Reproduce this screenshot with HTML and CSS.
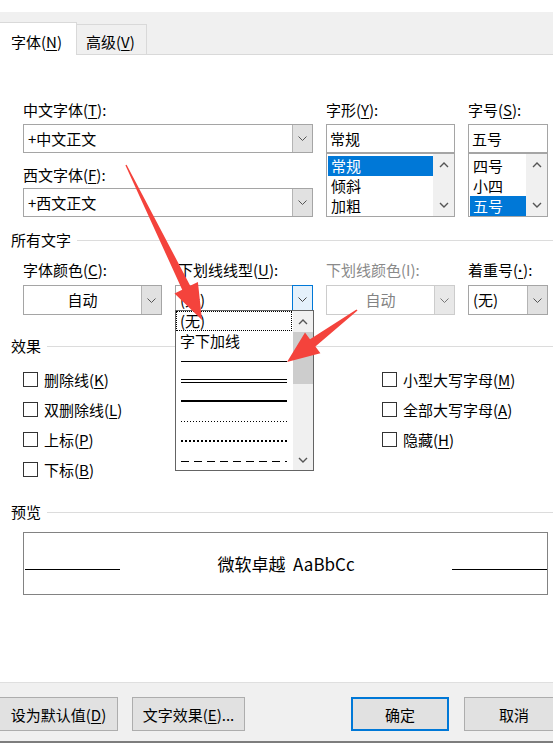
FILE: index.html
```html
<!DOCTYPE html>
<html lang="zh-CN">
<head>
    <meta charset="utf-8">
    <title>字体</title>
    <link rel="stylesheet" href="styles.css">
</head>
<body>
<div class="dlg">
    <div class="topgap"></div>
    <div class="tabs">
        <div class="tab on">字体(<u>N</u>)</div>
        <div class="tab">高级(<u>V</u>)</div>
    </div>

    <div class="content">
        <!-- 字体 / 字形 / 字号 -->
        <div class="fonts">
            <div class="col">
                <div class="lbl">中文字体(<u>T</u>):</div>
                <div class="combo"><span class="val">+中文正文</span><span class="btn"><svg width="9" height="5" viewBox="0 0 9 5"><path d="M.5.5l4 4 4-4" fill="none" stroke="#555"/></svg></span></div>
                <div class="lbl lbl2">西文字体(<u>F</u>):</div>
                <div class="combo"><span class="val">+西文正文</span><span class="btn"><svg width="9" height="5" viewBox="0 0 9 5"><path d="M.5.5l4 4 4-4" fill="none" stroke="#555"/></svg></span></div>
            </div>
            <div class="col">
                <div class="lbl">字形(<u>Y</u>):</div>
                <div class="tbox">常规</div>
                <div class="list">
                    <div class="items">
                        <div class="it sel">常规</div>
                        <div class="it">倾斜</div>
                        <div class="it">加粗</div>
                    </div>
                    <div class="sbar">
                        <span class="arr"><svg width="10" height="6" viewBox="0 0 10 6"><path d="M1 5l4-4 4 4" fill="none" stroke="#555" stroke-width="1.4"/></svg></span>
                        <span class="arr"><svg width="10" height="6" viewBox="0 0 10 6"><path d="M1 1l4 4 4-4" fill="none" stroke="#555" stroke-width="1.4"/></svg></span>
                    </div>
                </div>
            </div>
            <div class="col">
                <div class="lbl">字号(<u>S</u>):</div>
                <div class="tbox">五号</div>
                <div class="list">
                    <div class="items">
                        <div class="it">四号</div>
                        <div class="it">小四</div>
                        <div class="it sel">五号</div>
                    </div>
                    <div class="sbar">
                        <span class="arr"><svg width="10" height="6" viewBox="0 0 10 6"><path d="M1 5l4-4 4 4" fill="none" stroke="#555" stroke-width="1.4"/></svg></span>
                        <span class="arr"><svg width="10" height="6" viewBox="0 0 10 6"><path d="M1 1l4 4 4-4" fill="none" stroke="#555" stroke-width="1.4"/></svg></span>
                    </div>
                </div>
            </div>
        </div>

        <div class="sect s-all">所有文字</div>
        <div class="row2">
            <div>
                <div class="lbl">字体颜色(<u>C</u>):</div>
                <div class="combo"><span class="val mid">自动</span><span class="btn"><svg width="9" height="5" viewBox="0 0 9 5"><path d="M.5.5l4 4 4-4" fill="none" stroke="#555"/></svg></span></div>
            </div>
            <div class="ddwrap">
                <div class="lbl ind">下划线线型(<u>U</u>):</div>
                <div class="combo"><span class="val">(无)</span><span class="btn focus"><svg width="9" height="5" viewBox="0 0 9 5"><path d="M.5.5l4 4 4-4" fill="none" stroke="#444"/></svg></span></div>
                <div class="dd">
                    <div class="dditems">
                        <div class="ddit cur">(无)</div>
                        <div class="ddit">字下加线</div>
                        <div class="ddit"><div class="ln single"></div></div>
                        <div class="ddit"><div class="ln double"></div></div>
                        <div class="ddit"><div class="ln thick"></div></div>
                        <div class="ddit"><div class="ln dot"></div></div>
                        <div class="ddit"><div class="ln dotb"></div></div>
                        <div class="ddit"><div class="ln dash"></div></div>
                    </div>
                    <div class="ddbar">
                        <span class="arr"><svg width="10" height="6" viewBox="0 0 10 6"><path d="M1 5l4-4 4 4" fill="none" stroke="#555" stroke-width="1.4"/></svg></span>
                        <span class="thumb"></span>
                        <span class="fill"></span>
                        <span class="arr"><svg width="10" height="6" viewBox="0 0 10 6"><path d="M1 1l4 4 4-4" fill="none" stroke="#555" stroke-width="1.4"/></svg></span>
                    </div>
                </div>
            </div>
            <div>
                <div class="lbl off">下划线颜色(I):</div>
                <div class="combo dis"><span class="val mid">自动</span><span class="btn"><svg width="9" height="5" viewBox="0 0 9 5"><path d="M.5.5l4 4 4-4" fill="none" stroke="#777"/></svg></span></div>
            </div>
            <div>
                <div class="lbl">着重号(<u class="latin">·</u>):</div>
                <div class="combo"><span class="val">(无)</span><span class="btn"><svg width="9" height="5" viewBox="0 0 9 5"><path d="M.5.5l4 4 4-4" fill="none" stroke="#555"/></svg></span></div>
            </div>
        </div>

        <div class="sect s-fx">效果</div>
        <div class="checks">
            <div class="ccol">
                <label class="chk"><span class="box"></span><span>删除线(<u>K</u>)</span></label>
                <label class="chk"><span class="box"></span><span>双删除线(<u>L</u>)</span></label>
                <label class="chk"><span class="box"></span><span>上标(<u>P</u>)</span></label>
                <label class="chk"><span class="box"></span><span>下标(<u>B</u>)</span></label>
            </div>
            <div class="ccol">
                <label class="chk"><span class="box"></span><span>小型大写字母(<u>M</u>)</span></label>
                <label class="chk"><span class="box"></span><span>全部大写字母(<u>A</u>)</span></label>
                <label class="chk"><span class="box"></span><span>隐藏(<u>H</u>)</span></label>
            </div>
        </div>

        <div class="sect s-pv">预览</div>
        <div class="preview">
            <span class="pl left"></span>
            <span class="ptxt">微软卓越&nbsp; AaBbCc</span>
            <span class="pl right"></span>
        </div>
    </div>

    <div class="foot">
        <button class="b b1">设为默认值(<u>D</u>)</button>
        <button class="b b2">文字效果(<u>E</u>)...</button>
        <button class="b b3">确定</button>
        <button class="b b4">取消</button>
    </div>
    <div class="edge"></div>

    <!-- 标注箭头 -->
    <svg class="marks" width="553" height="747" viewBox="0 0 553 747">
        <polygon points="125.4,165.3 182.2,289.7 174.5,293.4 202,320 197.9,282 190.2,285.7 126.6,164.7" fill="#f4433c"/>
        <polygon points="356.5,309.4 310,339.3 305,332.5 287,362 320.4,353.3 315.4,346.5 357.5,310.6" fill="#f4433c"/>
    </svg>
</div>
</body>
</html>
```

FILE: styles.css
```css
/* 基本 */
* {
    box-sizing: border-box;
}

body {
    margin: 0;
    background: #fff;
    font-family: "Microsoft YaHei UI", "Noto Sans CJK SC", sans-serif;
    font-size: 15px;
    color: #000;
}

u {
    text-underline-offset: 2px;
}

.latin {
    font-family: "Liberation Sans", sans-serif;
    font-weight: bold;
}

.dlg {
    position: relative;
    width: 553px;
    height: 747px;
    overflow: hidden;
}

/* 标签页 */
.topgap {
    height: 12px;
}

.tabs {
    height: 43px;
    background: #f0f0f0;
    border-bottom: 1px solid #d9d9d9;
    display: flex;
    align-items: flex-end;
}

.tab {
    height: 30px;
    width: 70px;
    padding: 7px 0 0 9px;
    border: 1px solid #d9d9d9;
    border-left: none;
    border-bottom: none;
    line-height: 20px;
}

.tab.on {
    height: 33px;
    width: 77px;
    margin-bottom: -1px;
    padding: 9px 0 0 11px;
    background: #fff;
}

/* 内容 */
.content {
    padding-top: 45px;
}

.lbl {
    height: 20px;
    line-height: 20px;
    margin-bottom: 4px;
    white-space: nowrap;
}

.lbl.ind {
    padding-left: 3px;
}

.lbl.off {
    color: #8a8a8a;
}

.fonts {
    display: grid;
    grid-template-columns: 290px 129px 80px;
    column-gap: 13px;
    margin-left: 23px;
}

.lbl2 {
    margin-top: 12px;
    margin-bottom: 3px;
}

.combo {
    display: flex;
    height: 29px;
    border: 1px solid #a5a5a5;
    background: #fff;
}

.combo .val {
    flex: 1;
    padding-left: 4px;
    line-height: 27px;
    white-space: nowrap;
}

.combo .val.mid {
    text-align: center;
    padding-left: 0;
}

.combo .btn {
    width: 20px;
    background: #e1e1e1;
    border-left: 1px solid #b4b4b4;
    display: flex;
    align-items: center;
    justify-content: center;
}

.combo .btn.focus {
    background: #e5f1fb;
    border: 1px solid #0078d7;
    margin: -1px -1px 0 0;
    width: 21px;
}

.combo.dis {
    border-color: #cccccc;
}

.combo.dis .val {
    color: #838383;
}

.combo.dis .btn {
    background: #e8e8e8;
    border-left-color: #cccccc;
}

.tbox {
    height: 29px;
    border: 1px solid #a5a5a5;
    padding-left: 3px;
    line-height: 27px;
}

.list {
    display: flex;
    height: 64px;
    border: 1px solid #a5a5a5;
}

.items {
    flex: 1;
    padding: 2px 0 0 1px;
}

.it {
    height: 20px;
    line-height: 20px;
    padding-left: 3px;
}

.it.sel {
    background: #0078d7;
    color: #fff;
}

.sbar {
    width: 21px;
    background: #f0f0f0;
    display: flex;
    flex-direction: column;
    justify-content: space-between;
    padding: 6px 0;
}

.arr {
    display: flex;
    align-items: center;
    justify-content: center;
    height: 10px;
}

/* 分组标题 */
.sect {
    display: flex;
    align-items: center;
    gap: 6px;
    height: 20px;
    line-height: 20px;
    margin-left: 11px;
}

.sect::after {
    content: "";
    flex: 1;
    height: 1px;
    background: #dcdcdc;
}

.s-all {
    margin-top: 13px;
}

.s-fx {
    margin-top: 21px;
}

.s-pv {
    margin-top: 18px;
}

.row2 {
    display: grid;
    grid-template-columns: 139px 138px 129px 80px;
    column-gap: 13px;
    margin: 10px 0 0 23px;
}

.row2 .lbl {
    margin-bottom: 5px;
}

.row2 .combo {
    height: 30px;
}

.row2 .combo .val {
    line-height: 28px;
}

/* 下拉列表 */
.ddwrap {
    position: relative;
}

.dd {
    position: absolute;
    top: 50px;
    left: 0;
    width: 139px;
    height: 161px;
    border: 1px solid #646464;
    background: #fff;
    display: flex;
    z-index: 2;
}

.dditems {
    flex: 1;
}

.ddit {
    height: 20px;
    line-height: 18px;
    padding-left: 3px;
    display: flex;
    align-items: center;
    border: 1px solid transparent;
    margin-right: 1px;
}

.ddit.cur {
    border: 1px dotted #000;
}

.ln {
    width: 106px;
    margin-left: 1px;
}

.ln.single {
    height: 1px;
    background: #000;
}

.ln.double {
    height: 4px;
    border-top: 1px solid #000;
    border-bottom: 1px solid #000;
}

.ln.thick {
    height: 2px;
    background: #000;
}

.ln.dot {
    height: 1px;
    background: repeating-linear-gradient(90deg, #000 0 1px, transparent 1px 3px);
}

.ln.dotb {
    height: 2px;
    background: repeating-linear-gradient(90deg, #000 0 2px, transparent 2px 4px);
}

.ln.dash {
    height: 1px;
    background: repeating-linear-gradient(90deg, #000 0 8px, transparent 8px 13px);
}

.ddbar {
    width: 20px;
    background: #f0f0f0;
    display: flex;
    flex-direction: column;
}

.ddbar .arr {
    height: 21px;
}

.ddbar .thumb {
    height: 52px;
    background: #cdcdcd;
}

.ddbar .fill {
    flex: 1;
}

/* 效果 */
.checks {
    display: flex;
    margin: 8px 0 0 23px;
}

.ccol {
    display: flex;
    flex-direction: column;
}

.ccol:first-child {
    width: 359px;
}

.chk {
    display: flex;
    align-items: center;
    gap: 6px;
    height: 30px;
    white-space: nowrap;
}

.box {
    width: 15px;
    height: 15px;
    border: 1px solid #333;
    background: #fff;
}

/* 预览 */
.preview {
    display: flex;
    align-items: center;
    justify-content: space-between;
    width: 525px;
    height: 63px;
    margin: 10px 0 0 23px;
    border: 1px solid #828282;
}

.ptxt {
    font-size: 17px;
    white-space: nowrap;
}

.pl {
    height: 1px;
    width: 95px;
    background: #000;
    margin-top: 12px;
}

.pl.left {
    margin-left: 1px;
}

/* 底部按钮 */
.foot {
    margin-top: 87px;
    height: 59px;
    background: #f0f0f0;
    border-top: 1px solid #dfdfdf;
    padding-top: 14px;
    display: flex;
    align-items: flex-start;
}

.b {
    height: 34px;
    background: #e1e1e1;
    border: 1px solid #adadad;
    font-family: inherit;
    font-size: 15px;
    color: #000;
    padding: 0;
    flex: none;
}

.b1 {
    width: 119px;
    margin-left: -1px;
}

.b2 {
    width: 113px;
    margin-left: 14px;
}

.b3 {
    width: 98px;
    margin-left: 106px;
    border: 2px solid #0078d7;
}

.b4 {
    width: 100px;
    margin-left: 15px;
}

.edge {
    height: 2px;
    background: #7d7d7d;
}

.marks {
    position: absolute;
    top: 0;
    left: 0;
    pointer-events: none;
    z-index: 5;
}
```
